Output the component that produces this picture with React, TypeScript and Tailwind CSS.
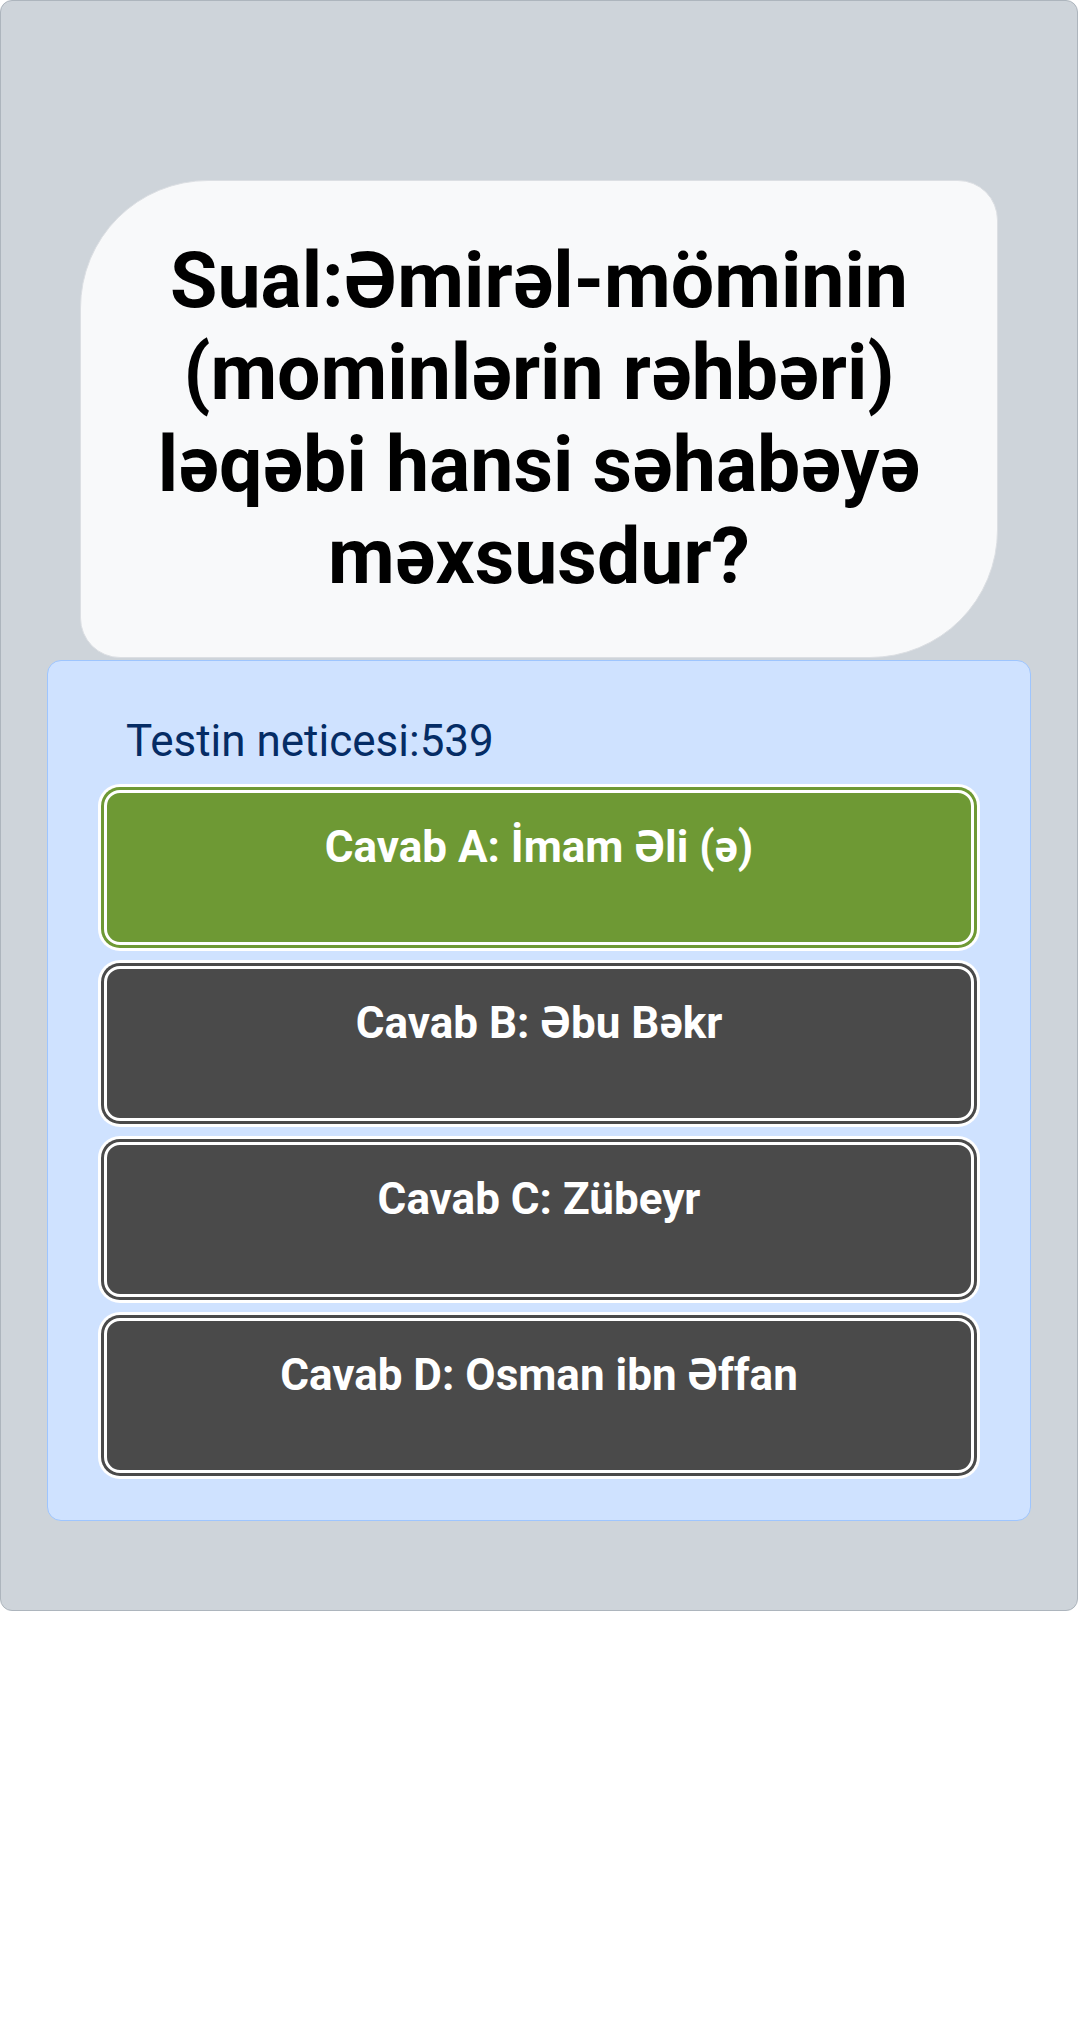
import { useState } from 'react';

type Answer = { key: string; text: string };

const answers: Answer[] = [
  { key: 'A', text: 'İmam Əli (ə)' },
  { key: 'B', text: 'Əbu Bəkr' },
  { key: 'C', text: 'Zübeyr' },
  { key: 'D', text: 'Osman ibn Əffan' },
];

export default function App() {
  const [correct] = useState('A');
  const [score] = useState(539);

  return (
    <div className="bg-white" style={{ fontFamily: 'Roboto, "Noto Sans", sans-serif' }}>
      <div className="border border-[#adb5bd] bg-[#ced4da] rounded-xl pt-[179px] pb-[89px]">
        {/* question bubble */}
        <div className="mx-[79px] h-[478px] flex items-center justify-center px-[40px] bg-[#f8f9fa] border border-[#dcdfe3] rounded-tl-[128px] rounded-br-[128px] rounded-tr-[40px] rounded-bl-[40px]">
          <h1 className="text-[77px] leading-[92px] font-bold text-black text-center">
            Sual:Əmirəl-möminin (mominlərin rəhbəri) ləqəbi hansi səhabəyə məxsusdur?
          </h1>
        </div>

        {/* answers panel */}
        <div className="mt-[2px] mx-[46px] bg-[#cfe2ff] border border-[#9ec5fe] rounded-[14px] pt-[47px] pb-[47px]">
          <div className="pl-[78px] text-[44px] leading-[66px] text-[#052c65]">Testin neticesi:{score}</div>
          <div className="mt-[16px] mx-[56px] flex flex-col gap-[21px]">
            {answers.map((a) =>
              a.key === correct ? (
                <button
                  key={a.key}
                  className="h-[155px] pt-[24px] flex justify-center items-start rounded-[16px] border-[3px] border-white bg-[#6e9934] text-white text-[44px] leading-[60px] font-bold shadow-[0_0_0_3px_#6e9934,0_0_0_6px_#ffffff]"
                >
                  Cavab {a.key}: {a.text}
                </button>
              ) : (
                <button
                  key={a.key}
                  className="h-[155px] pt-[24px] flex justify-center items-start rounded-[16px] border-[3px] border-white bg-[#4a4a4a] text-white text-[44px] leading-[60px] font-bold shadow-[0_0_0_3px_#4a4a4a,0_0_0_6px_#ffffff]"
                >
                  Cavab {a.key}: {a.text}
                </button>
              )
            )}
          </div>
        </div>
      </div>
    </div>
  );
}
